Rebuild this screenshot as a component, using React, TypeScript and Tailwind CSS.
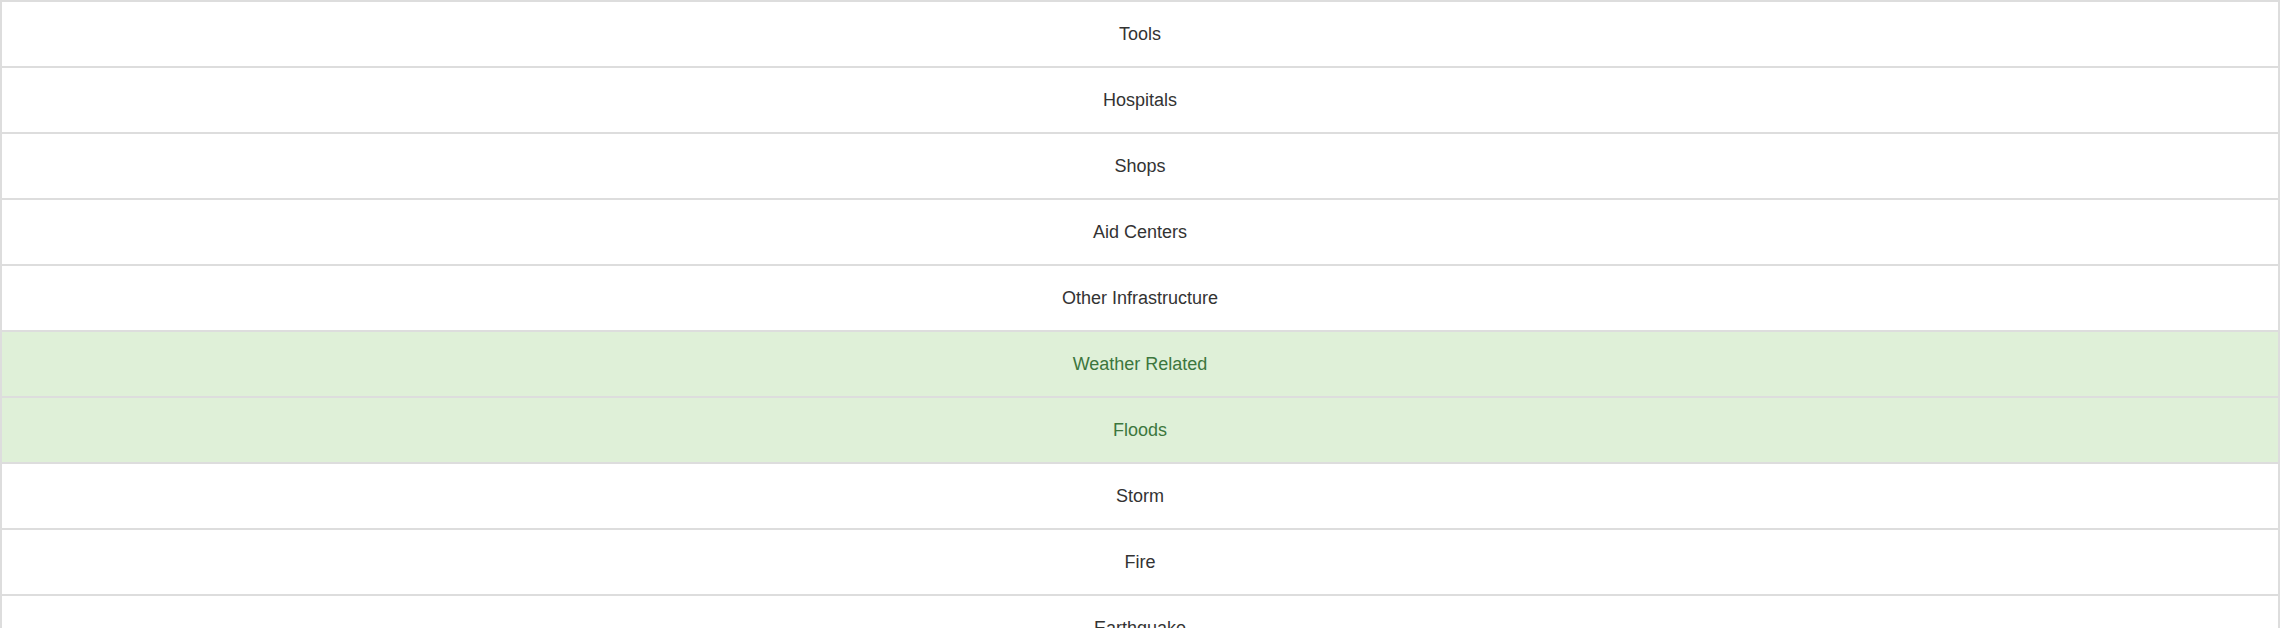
const items: { label: string; success?: boolean }[] = [
  { label: "Tools" },
  { label: "Hospitals" },
  { label: "Shops" },
  { label: "Aid Centers" },
  { label: "Other Infrastructure" },
  { label: "Weather Related", success: true },
  { label: "Floods", success: true },
  { label: "Storm" },
  { label: "Fire" },
  { label: "Earthquake" },
];

export default function App() {
  return (
    <div className="h-[628px] w-[2280px] overflow-hidden bg-white font-['Liberation_Sans',Arial,sans-serif] text-[18px]">
      <ul className="flex flex-col">
        {items.map((item) => (
          <li
            key={item.label}
            className={`-mb-[2px] flex h-[68px] items-center justify-center border-2 border-[#dddddd] ${
              item.success ? "bg-[#dff0d8] text-[#3c763d]" : "bg-white text-[#333333]"
            }`}
          >
            {item.label}
          </li>
        ))}
      </ul>
    </div>
  );
}
